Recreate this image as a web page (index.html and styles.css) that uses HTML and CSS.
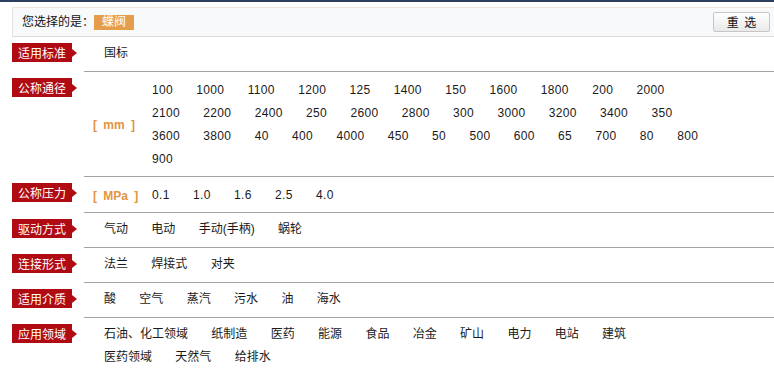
FILE: index.html
```html
<!DOCTYPE html>
<html lang="zh">
<head>
<meta charset="utf-8">
<title>筛选</title>
<link rel="stylesheet" href="styles.css">
</head>
<body>
<div class="topbar"></div>
<div class="selected">
  <span class="selected-title">您选择的是：</span>
  <span class="selected-tag">蝶阀</span>
  <button class="reset" type="button">重 选</button>
</div>

<div class="row">
  <div class="row-label"><span class="label">适用标准</span></div>
  <div class="row-body">
    <ul class="values"><li>国标</li></ul>
  </div>
</div>

<div class="row">
  <div class="row-label"><span class="label">公称通径</span></div>
  <div class="row-body row-body--unit">
    <span class="unit">[ mm ]</span>
    <ul class="values values--num">
      <li>100</li><li>1000</li><li>1100</li><li>1200</li><li>125</li><li>1400</li><li>150</li><li>1600</li><li>1800</li><li>200</li><li>2000</li>
      <li>2100</li><li>2200</li><li>2400</li><li>250</li><li>2600</li><li>2800</li><li>300</li><li>3000</li><li>3200</li><li>3400</li><li>350</li>
      <li>3600</li><li>3800</li><li>40</li><li>400</li><li>4000</li><li>450</li><li>50</li><li>500</li><li>600</li><li>65</li><li>700</li><li>80</li><li>800</li>
      <li>900</li>
    </ul>
  </div>
</div>

<div class="row">
  <div class="row-label"><span class="label">公称压力</span></div>
  <div class="row-body row-body--unit">
    <span class="unit">[ MPa ]</span>
    <ul class="values values--num">
      <li>0.1</li><li>1.0</li><li>1.6</li><li>2.5</li><li>4.0</li>
    </ul>
  </div>
</div>

<div class="row">
  <div class="row-label"><span class="label">驱动方式</span></div>
  <div class="row-body">
    <ul class="values">
      <li>气动</li><li>电动</li><li>手动(手柄)</li><li>蜗轮</li>
    </ul>
  </div>
</div>

<div class="row">
  <div class="row-label"><span class="label">连接形式</span></div>
  <div class="row-body">
    <ul class="values">
      <li>法兰</li><li>焊接式</li><li>对夹</li>
    </ul>
  </div>
</div>

<div class="row">
  <div class="row-label"><span class="label">适用介质</span></div>
  <div class="row-body">
    <ul class="values">
      <li>酸</li><li>空气</li><li>蒸汽</li><li>污水</li><li>油</li><li>海水</li>
    </ul>
  </div>
</div>

<div class="row">
  <div class="row-label"><span class="label">应用领域</span></div>
  <div class="row-body">
    <ul class="values">
      <li>石油、化工领域</li><li>纸制造</li><li>医药</li><li>能源</li><li>食品</li><li>冶金</li><li>矿山</li><li>电力</li><li>电站</li><li>建筑</li><li>医药领域</li><li>天然气</li><li>给排水</li>
    </ul>
  </div>
</div>
</body>
</html>
```

FILE: styles.css
```css
* {
  box-sizing: border-box;
}

html, body {
  margin: 0;
  padding: 0;
  background: #ffffff;
}

body {
  font-family: "Liberation Sans", Arial, "Noto Sans CJK SC", sans-serif;
  font-size: 12px;
  color: #111111;
  overflow: hidden;
}

.topbar {
  height: 2px;
  background: #2d3f5e;
}

.selected {
  margin: 5px 0 0 12px;
  height: 30px;
  border: 1px solid #e4e2de;
  border-right: none;
  border-top-color: #ebe5dc;
  border-bottom-color: #dcdcdc;
  background: #f8f9fb;
  display: flex;
  align-items: center;
  padding-left: 9px;
  padding-right: 4px;
}

.selected-title {
  color: #111111;
  line-height: 16px;
}

.selected-tag {
  display: inline-block;
  background: #e59d4c;
  color: #ffffff;
  height: 15px;
  line-height: 15px;
  padding: 0 8px;
}

.reset {
  margin-left: auto;
  width: 57px;
  height: 20px;
  padding: 0;
  border: 1px solid #c6c6c6;
  border-radius: 2px;
  background: linear-gradient(#ffffff, #e9e9e9);
  font-family: "Noto Sans CJK SC", sans-serif;
  font-size: 12px;
  line-height: 18px;
  color: #111111;
  word-spacing: 3px;
}

.row {
  display: flex;
}

.row-label {
  width: 84px;
  flex: none;
  padding: 6px 0 0 12px;
}

.label {
  display: inline-flex;
  align-items: center;
  height: 19px;
  line-height: 19px;
  padding: 0 6px;
  background: #b00a12;
  color: #ffffff;
  font-family: "Noto Sans CJK SC", sans-serif;
  font-size: 12px;
}

.label::after {
  content: "";
  display: block;
  width: 0;
  height: 0;
  border-left: 5px solid #b00a12;
  border-top: 4px solid transparent;
  border-bottom: 4px solid transparent;
  margin-right: -11px;
  margin-left: 6px;
}

.row-body {
  flex: 1;
  display: flex;
  align-items: flex-start;
  padding: 5px 72px 6px 10px;
  border-bottom: 1px solid #a3a3a3;
}

.row-body--unit {
  padding-top: 7px;
  padding-bottom: 5px;
  padding-right: 58px;
  align-items: center;
}

.unit {
  width: 49px;
  flex: none;
  color: #e39440;
  font-weight: bold;
  word-spacing: 3px;
  margin-left: -1px;
  white-space: nowrap;
}

.values {
  flex: 1;
  list-style: none;
  margin: 0;
  padding: 0;
  display: flex;
  flex-wrap: wrap;
  column-gap: 3.33px;
  line-height: 23px;
  align-self: flex-start;
}

.values li {
  padding: 0 10px;
  color: #1a1a1a;
  white-space: nowrap;
}

.values--num li {
  letter-spacing: 0.33px;
}
```
